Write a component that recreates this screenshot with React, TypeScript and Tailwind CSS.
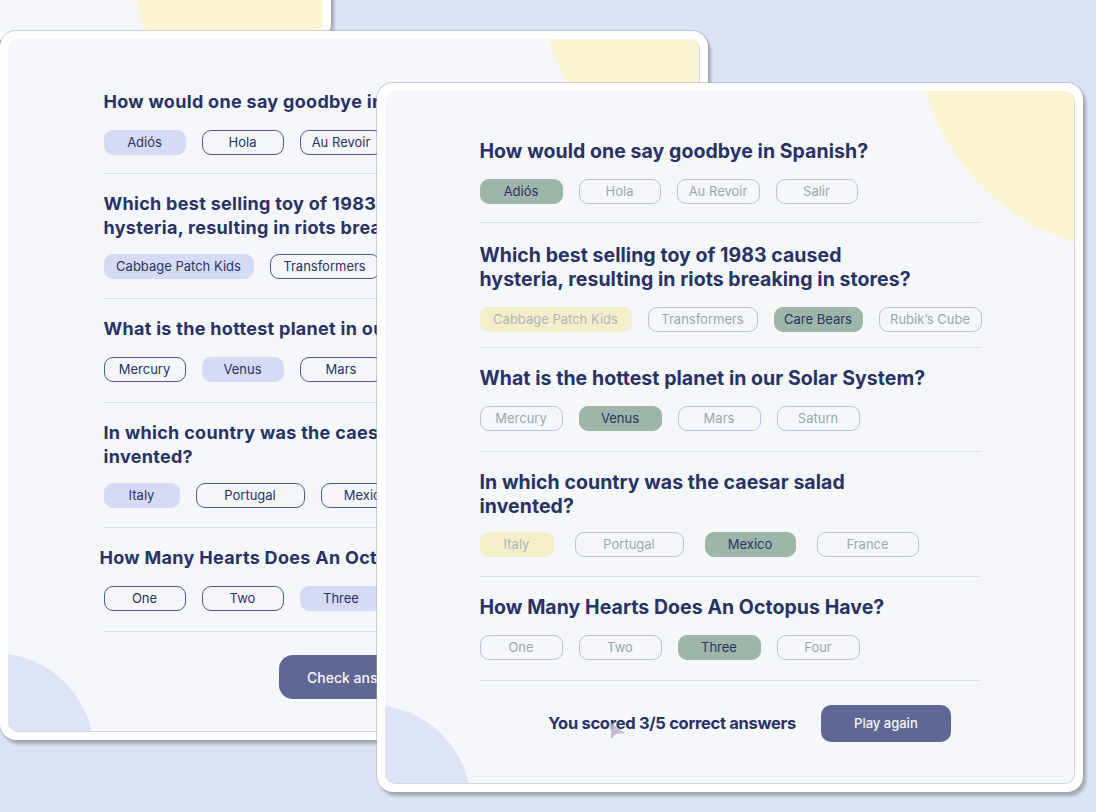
import React from 'react';

type V = 'l' | 'lsel' | 'dim' | 'ok' | 'bad';

const pillCls: Record<V, string> = {
  l: 'border border-[#4d5b9e] text-[#293264]',
  lsel: 'border border-[#d6dbf5] bg-[#d6dbf5] text-[#293264]',
  dim: 'border border-[#bcc3df] text-[#9aa9ab]',
  ok: 'border border-[#9db6a9] bg-[#9db6a9] text-[#293264]',
  bad: 'border border-[#f5eecb] bg-[#f5eecb] text-[#adb7b8]',
};

type Opt = { t: string; w: number; v: V };
type Q = {
  q: React.ReactNode;
  opts: Opt[];
  two?: boolean;
  first?: boolean;
  loose?: boolean;
  shift?: boolean;
  wide?: boolean;
};

function Pill({ o }: { o: Opt }) {
  return (
    <div
      className={`h-[25px] shrink-0 rounded-[9px] flex items-center justify-center text-[13px] leading-none ${pillCls[o.v]}`}
      style={{ width: o.w }}
    >
      {o.t}
    </div>
  );
}

function Block({ b, left }: { b: Q; left?: boolean }) {
  const pad = b.loose
    ? 'pt-[20px] pb-[15px]'
    : b.first
      ? 'pt-[18px] pb-[18px]'
      : b.two
        ? 'pt-[18px] pb-[19px]'
        : 'pt-[18px] pb-[20px]';
  const mt = b.loose ? 'mt-[16px]' : b.two ? 'mt-[14px]' : 'mt-[16px]';
  return (
    <div className={`border-b border-[#dbdff0] ${pad}`}>
      <h2
        className={
          left
            ? `text-[18px] leading-[24px] font-bold text-[#293264] tracking-[0.3px] whitespace-nowrap ${b.shift ? '-ml-[4px]' : ''}`
            : 'text-[19.5px] leading-[24px] font-bold text-[#293264] tracking-[0.05px] whitespace-nowrap'
        }
      >
        {b.q}
      </h2>
      <div className={`flex ${mt} ${b.wide ? 'gap-[21px]' : 'gap-[16px]'}`}>
        {b.opts.map((o) => (
          <Pill key={o.t} o={o} />
        ))}
      </div>
    </div>
  );
}

function Card({ children }: { children: React.ReactNode }) {
  return (
    <div className="w-full h-full rounded-[16px] bg-white p-[8px] shadow-[0_0_0_1px_rgba(150,160,190,0.45),3px_4px_3px_rgba(90,110,100,0.45)]">
      <div className="relative w-full h-full rounded-[10px] bg-[#f5f7fb] overflow-hidden border-b border-r border-[#d3d7e8]">
        <div className="absolute left-[531px] top-[-290px] w-[452px] h-[452px] rounded-full bg-[#fcf5d4]" />
        <div className="absolute left-[-114px] bottom-[-122px] w-[200px] h-[200px] rounded-full bg-[#dfe3f6]" />
        <div className="relative">{children}</div>
      </div>
    </div>
  );
}

const q2 = (
  <>
    Which best selling toy of 1983 caused
    <br />
    hysteria, resulting in riots breaking in stores?
  </>
);
const q4 = (
  <>
    In which country was the caesar salad
    <br />
    invented?
  </>
);

const leftQs: Q[] = [
  {
    q: 'How would one say goodbye in Spanish?',
    first: true,
    opts: [
      { t: 'Adiós', w: 82, v: 'lsel' },
      { t: 'Hola', w: 82, v: 'l' },
      { t: 'Au Revoir', w: 83, v: 'l' },
      { t: 'Salir', w: 83, v: 'l' },
    ],
  },
  {
    q: q2,
    two: true,
    opts: [
      { t: 'Cabbage Patch Kids', w: 150, v: 'lsel' },
      { t: 'Transformers', w: 110, v: 'l' },
      { t: 'Care Bears', w: 89, v: 'l' },
      { t: 'Rubik’s Cube', w: 103, v: 'l' },
    ],
  },
  {
    q: 'What is the hottest planet in our Solar System?',
    opts: [
      { t: 'Mercury', w: 82, v: 'l' },
      { t: 'Venus', w: 82, v: 'lsel' },
      { t: 'Mars', w: 83, v: 'l' },
      { t: 'Saturn', w: 83, v: 'l' },
    ],
  },
  {
    q: q4,
    two: true,
    opts: [
      { t: 'Italy', w: 76, v: 'lsel' },
      { t: 'Portugal', w: 109, v: 'l' },
      { t: 'Mexico', w: 91, v: 'l' },
      { t: 'France', w: 102, v: 'l' },
    ],
  },
  {
    q: 'How Many Hearts Does An Octopus Have?',
    shift: true,
    opts: [
      { t: 'One', w: 82, v: 'l' },
      { t: 'Two', w: 82, v: 'l' },
      { t: 'Three', w: 83, v: 'lsel' },
      { t: 'Four', w: 83, v: 'l' },
    ],
  },
];

const rightQs: Q[] = [
  {
    q: 'How would one say goodbye in Spanish?',
    first: true,
    opts: [
      { t: 'Adiós', w: 83, v: 'ok' },
      { t: 'Hola', w: 82, v: 'dim' },
      { t: 'Au Revoir', w: 83, v: 'dim' },
      { t: 'Salir', w: 82, v: 'dim' },
    ],
  },
  {
    q: q2,
    two: true,
    loose: true,
    opts: [
      { t: 'Cabbage Patch Kids', w: 152, v: 'bad' },
      { t: 'Transformers', w: 110, v: 'dim' },
      { t: 'Care Bears', w: 89, v: 'ok' },
      { t: 'Rubik’s Cube', w: 103, v: 'dim' },
    ],
  },
  {
    q: 'What is the hottest planet in our Solar System?',
    opts: [
      { t: 'Mercury', w: 83, v: 'dim' },
      { t: 'Venus', w: 83, v: 'ok' },
      { t: 'Mars', w: 83, v: 'dim' },
      { t: 'Saturn', w: 83, v: 'dim' },
    ],
  },
  {
    q: q4,
    two: true,
    wide: true,
    opts: [
      { t: 'Italy', w: 74, v: 'bad' },
      { t: 'Portugal', w: 109, v: 'dim' },
      { t: 'Mexico', w: 91, v: 'ok' },
      { t: 'France', w: 102, v: 'dim' },
    ],
  },
  {
    q: 'How Many Hearts Does An Octopus Have?',
    opts: [
      { t: 'One', w: 83, v: 'dim' },
      { t: 'Two', w: 83, v: 'dim' },
      { t: 'Three', w: 83, v: 'ok' },
      { t: 'Four', w: 83, v: 'dim' },
    ],
  },
];

export default function App() {
  return (
    <div className="relative w-[1096px] h-[812px] overflow-hidden bg-[#dee2f5] [font-family:Inter,sans-serif]">
      {/* card far behind, top-left */}
      <div className="absolute left-[-380px] top-[-700px] w-[711px] h-[740px] rounded-[16px] bg-white p-[8px] shadow-[0_0_0_1px_rgba(150,160,190,0.45),3px_4px_3px_rgba(90,110,100,0.45)]">
        <div className="relative w-full h-full rounded-[10px] bg-[#f5f7fb] overflow-hidden">
          <div className="absolute left-[505px] top-[426px] w-[452px] h-[452px] rounded-full bg-[#fcf5d4]" />
        </div>
      </div>

      {/* left card: answering */}
      <div className="absolute left-0 top-[31px] w-[708px] h-[709px]">
        <Card>
          <div className="w-[500px] mx-auto pt-[33px]">
            {leftQs.map((b, i) => (
              <Block key={i} b={b} left />
            ))}
            <div className="mt-[23px] flex justify-center pl-[10px]">
              <button className="h-[44px] px-[28px] rounded-[14px] bg-[#5f6794] text-[#f5f7fb] text-[14px] font-medium">
                Check answers
              </button>
            </div>
          </div>
        </Card>
      </div>

      {/* right card: results */}
      <div className="absolute left-[377px] top-[83px] w-[706px] h-[709px]">
        <Card>
          <div className="w-[500px] mx-auto pt-[30px]">
            {rightQs.map((b, i) => (
              <Block key={i} b={b} />
            ))}
            <div className="mt-[24px] flex items-center justify-center gap-[25px] pl-[40px]">
              <span className="text-[16.5px] font-bold text-[#293264] tracking-[-0.3px] whitespace-nowrap">
                You scored 3/5 correct answers
              </span>
              <button className="h-[37px] w-[130px] rounded-[10px] bg-[#5f6794] text-[#f5f7fb] text-[13px] font-medium">
                Play again
              </button>
            </div>
          </div>
        </Card>
      </div>

      {/* mouse pointer */}
      <svg className="absolute left-[609px] top-[721px]" width="18" height="20" viewBox="0 0 18 20">
        <path d="M2 2 L2 18 L7 13 L16 12 Z" fill="#b4b9cf" fillOpacity="0.85" />
      </svg>
    </div>
  );
}
